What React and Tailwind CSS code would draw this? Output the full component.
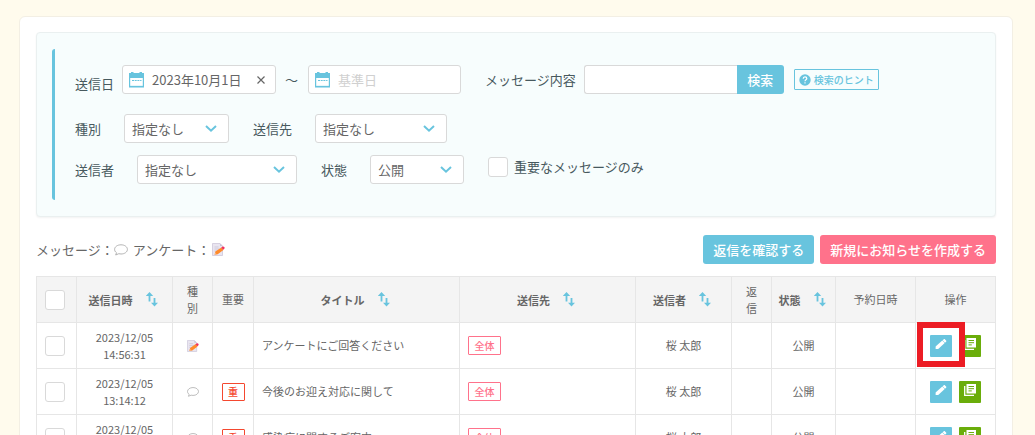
import clsx from "clsx";

const messages = [
  { date: "2023/12/05", time: "14:56:31", survey: true, important: false, title: "アンケートにご回答ください", highlight: true },
  { date: "2023/12/05", time: "13:14:12", survey: false, important: true, title: "今後のお迎え対応に関して" },
  { date: "2023/12/05", time: "13:10:45", survey: false, important: true, title: "感染症に関するご案内" },
];

function CalendarIcon() {
  return (
    <svg className="h-4 w-[15px] shrink-0" viewBox="0 0 15 16" fill="none" aria-hidden="true">
      <path d="M2 0h2.500v1h6V0H13v1h2v5H0V1h2z" fill="#68c4de" />
      <path d="M.6 5v9.700h13.800V5" stroke="#68c4de" strokeWidth="1.200" />
      <path d="M0 14.600h15" stroke="#68c4de" strokeWidth="1.500" />
      <path d="M3 8.500h9.500" stroke="#68c4de" strokeDasharray="2 .7" />
    </svg>
  );
}

function Chevron() {
  return (
    <svg className="pointer-events-none absolute top-0 right-3 h-full w-3" viewBox="0 0 12 12" fill="none" aria-hidden="true">
      <path d="M1 3.500 6 8.200l5-4.700" stroke="#68c4de" strokeWidth="2" />
    </svg>
  );
}

function SortIcon() {
  return (
    <svg className="h-4 w-3 shrink-0" viewBox="0 0 12 16" fill="#68c4de" aria-hidden="true">
      <path d="M3.500 0 7.200 4H4.400v5.500H2.600V4H-.2z" />
      <path d="M8.500 14.500 5 10.800h2.600V6h1.800v4.800H12z" />
    </svg>
  );
}

function BubbleIcon({ className }) {
  return (
    <svg className={className} viewBox="0 0 14 12" fill="none" aria-hidden="true">
      <path d="M7 .8c3.600 0 6.400 2 6.400 4.600S10.600 10 7 10c-.8 0-1.500-.1-2.200-.3L1.700 11l.8-2.300C1.200 7.800.6 6.700.6 5.400.6 2.800 3.400.8 7 .8z" stroke="#aaa" strokeWidth=".9" />
    </svg>
  );
}

function MemoIcon({ className }) {
  return (
    <svg className={className} viewBox="0 0 13 13" aria-hidden="true">
      <path d="M.5.5H8L10.500 3v9.500H.5z" fill="#e9e5f0" stroke="#c9c2d6" strokeWidth=".7" />
      <path d="M8 .5V3h2.500z" fill="#c9c2d6" />
      <path d="M2.500 4h4M2.500 6h5M2.500 8h3" stroke="#c6bfd3" strokeWidth=".7" />
      <path d="m2.600 11.800.8-3.200 6-4.200 2 2.600-5.700 4.300z" fill="#ff8b2b" />
      <path d="m9.300 4.500 1-.8c.7-.5 1.500-.4 2 .3.5.7.4 1.500-.2 2l-1 .8z" fill="#f0305f" />
      <path d="m2.600 11.800.6-2.300 1.500 1.900z" fill="#f7b98a" />
    </svg>
  );
}

function PencilIcon() {
  return (
    <svg className="h-3 w-3" viewBox="0 0 12 12" fill="#fff" aria-hidden="true">
      <path d="M.6 8.500 7.300 2.500l2.400 2.600L3.200 11H.6z" />
      <path d="m7.600 2.300 1-.9c.4-.4 1-.4 1.400 0l1.100 1.100c.4.4.4 1 0 1.300l-1.100 1z" />
    </svg>
  );
}

function LibraryIcon() {
  return (
    <svg className="h-3 w-3" viewBox="0 0 12 12" fill="none" aria-hidden="true">
      <path d="M2.500 0H12v9.500H2.500z" fill="#fff" />
      <path d="M.7 2v9.300H10" stroke="#fff" strokeWidth="1.300" />
      <path d="M4.500 2.500H10M4.500 4.700H10M4.500 6.900h3.300" stroke="#6aad0a" />
    </svg>
  );
}

function FilterSelect({ id, value, className }) {
  return (
    <div className={clsx("relative", className)}>
      <select id={id} className="h-[29px] w-full appearance-none rounded-[3px] border border-[#d9d9d9] bg-white pr-6 pl-[7px] text-[#666]">
        <option>{value}</option>
      </select>
      <Chevron />
    </div>
  );
}

function CheckBox(props) {
  return (
    <input
      type="checkbox"
      className="block h-5 w-5 shrink-0 appearance-none rounded-[3px] border border-[#d9d9d9] bg-white checked:bg-[#68c4de]"
      {...props}
    />
  );
}

function Th({ children, sortable }) {
  return (
    <th className={clsx("h-[46px] border border-[#e6e6e6] p-0", sortable ? "font-bold" : "font-normal")}>
      {sortable ? (
        <button type="button" className="inline-flex items-center gap-[13px] pr-[3px] align-middle">
          {children}
          <SortIcon />
        </button>
      ) : (
        children
      )}
    </th>
  );
}

function SearchPanel() {
  return (
    <form className="rounded-[4px] border border-[#eaf0f0] bg-[#f7fdfd] p-4 pl-[15px] text-[13px] leading-5 text-[#47595e] shadow-xs">
      <div className="flex flex-col rounded-l-[3px] border-l-3 border-[#68c4de] py-4 pl-5">
        <div className="flex items-center">
          <label htmlFor="from" className="self-end">送信日</label>
          <div className="ml-2 flex h-[29px] w-[154px] items-center rounded-[3px] border border-[#d9d9d9] bg-white px-[6px] text-[#666]">
            <CalendarIcon />
            <input id="from" type="text" defaultValue="2023年10月1日" className="ml-2 w-full min-w-0 outline-none" />
            <button type="button" aria-label="クリア" className="w-4 shrink-0">
              <svg className="mx-auto h-2 w-2" viewBox="0 0 8 8" stroke="#666" strokeWidth="1.200" aria-hidden="true">
                <path d="m.5.5 7 7M7.500.5l-7 7" />
              </svg>
            </button>
          </div>
          <span className="mr-[10px] ml-[9px]">～</span>
          <div className="flex h-[29px] w-[153px] items-center rounded-[3px] border border-[#d9d9d9] bg-white px-[6px]">
            <CalendarIcon />
            <input type="text" aria-label="基準日" placeholder="基準日" className="ml-2 w-full min-w-0 outline-none placeholder:text-[#d0d0d0]" />
          </div>
          <label htmlFor="content" className="ml-6">メッセージ内容</label>
          <input id="content" type="text" className="ml-2 h-[29px] w-[153px] rounded-l-[3px] border border-r-0 border-[#d9d9d9] bg-white px-2 outline-none" />
          <button type="submit" className="h-[29px] w-[47px] rounded-r-[3px] bg-[#68c4de] font-medium text-white">検索</button>
          <button type="button" className="ml-[10px] flex h-[21px] items-center gap-[3px] rounded-[1px] border border-[#68c4de] px-1 text-[10px] font-medium text-[#68c4de]">
            <svg className="h-3 w-3" viewBox="0 0 12 12" fill="none" aria-hidden="true">
              <circle cx="6" cy="6" r="5.700" fill="#68c4de" />
              <path d="M4.200 4.800c0-1.200.8-1.900 1.800-1.900s1.800.7 1.800 1.600c0 1.300-1.800 1.300-1.800 2.700M6 8.200v1.300" stroke="#fff" strokeWidth="1.200" />
            </svg>
            検索のヒント
          </button>
        </div>

        <div className="mt-5 flex items-center">
          <label htmlFor="kind">種別</label>
          <FilterSelect id="kind" value="指定なし" className="ml-[23px] w-[105px]" />
          <label htmlFor="target" className="ml-6">送信先</label>
          <FilterSelect id="target" value="指定なし" className="ml-[23px] w-[132px]" />
        </div>

        <div className="mt-3 flex items-center">
          <label htmlFor="sender">送信者</label>
          <FilterSelect id="sender" value="指定なし" className="ml-[23px] w-[160px]" />
          <label htmlFor="status" className="ml-6">状態</label>
          <FilterSelect id="status" value="公開" className="ml-[23px] w-[94px]" />
          <label className="ml-6 flex h-6 items-center gap-[6px] self-start">
            <CheckBox />
            重要なメッセージのみ
          </label>
        </div>
      </div>
    </form>
  );
}

function MessageRow({ message }) {
  return (
    <tr className="h-[46px]">
      <td className="border border-[#e6e6e6] p-0 pl-2"><CheckBox aria-label={message.title} /></td>
      <td className="border border-[#e6e6e6] text-center">{message.date}<br />{message.time}</td>
      <td className="border border-[#e6e6e6]">
        {message.survey ? <MemoIcon className="mx-auto h-3 w-3" /> : <BubbleIcon className="mx-auto h-3 w-3" />}
      </td>
      <td className="border border-[#e6e6e6]">
        {message.important && (
          <span className="mx-auto flex h-[18px] w-[23px] items-center justify-center rounded-[1px] border border-[#f4482f] text-[10px] font-medium text-[#f4482f]">重</span>
        )}
      </td>
      <td className="border border-[#e6e6e6] px-2">{message.title}</td>
      <td className="border border-[#e6e6e6] px-2">
        <span className="flex h-[19px] w-[33px] items-center justify-center rounded-[1px] border border-[#ff728b] text-[10px] font-medium text-[#ff728b]">全体</span>
      </td>
      <td className="border border-[#e6e6e6] text-center">桜 太郎</td>
      <td className="border border-[#e6e6e6]"></td>
      <td className="border border-[#e6e6e6] text-center">公開</td>
      <td className="border border-[#e6e6e6]"></td>
      <td className="border border-[#e6e6e6]">
        <div className="flex justify-center gap-[7px]">
          <div className="relative">
            <button type="button" aria-label="編集" className="flex h-[22px] w-[22px] justify-center rounded-[1px] bg-[#68c4de] pt-[3px]">
              <PencilIcon />
            </button>
            {message.highlight && <span className="pointer-events-none absolute -inset-x-[13px] -top-[13px] -bottom-[10px] z-10 border-6 border-[#ec1c24]"></span>}
          </div>
          <button type="button" aria-label="詳細" className="flex h-[22px] w-[22px] justify-center rounded-[1px] bg-[#6aad0a] pt-[3px]">
            <LibraryIcon />
          </button>
        </div>
      </td>
    </tr>
  );
}

export default function App() {
  return (
    <div className="h-screen overflow-hidden bg-[#fffbed] pt-4 pr-[22px] pl-[19px] font-['Noto_Sans_CJK_JP',sans-serif] text-[#666]">
      <main className="rounded-[6px] border border-[#f3efe4] bg-white p-4 pt-[15px]">
        <SearchPanel />

        <div className="mt-[18px] flex items-center justify-between text-[13px] leading-5">
          <p className="flex items-center">
            メッセージ：
            <BubbleIcon className="mr-[5px] h-3 w-[14px]" />
            アンケート：
            <MemoIcon className="ml-[2px] h-[13px] w-[13px]" />
          </p>
          <div className="flex gap-[6px]">
            <button type="button" className="h-[29px] rounded-[3px] bg-[#68c4de] px-[10px] font-medium text-white">返信を確認する</button>
            <button type="button" className="h-[29px] rounded-[3px] bg-[#ff728b] px-[10px] font-medium text-white">新規にお知らせを作成する</button>
          </div>
        </div>

        <table className="mt-3 w-full table-fixed border-collapse text-[11px] leading-[17px]">
          <colgroup>
            <col className="w-10" />
            <col className="w-24" />
            <col className="w-10" />
            <col className="w-[41px]" />
            <col />
            <col className="w-44" />
            <col className="w-24" />
            <col className="w-10" />
            <col className="w-16" />
            <col className="w-20" />
            <col className="w-20" />
          </colgroup>
          <thead className="bg-[#f4f4f4]">
            <tr>
              <th className="border border-[#e6e6e6] p-0 pl-2"><CheckBox aria-label="すべて選択" /></th>
              <Th sortable>送信日時</Th>
              <Th>種<br />別</Th>
              <Th>重要</Th>
              <Th sortable>タイトル</Th>
              <Th sortable>送信先</Th>
              <Th sortable>送信者</Th>
              <Th>返<br />信</Th>
              <Th sortable>状態</Th>
              <Th>予約日時</Th>
              <Th>操作</Th>
            </tr>
          </thead>
          <tbody>
            {messages.map((message) => (
              <MessageRow key={message.title} message={message} />
            ))}
          </tbody>
        </table>
      </main>
    </div>
  );
}
